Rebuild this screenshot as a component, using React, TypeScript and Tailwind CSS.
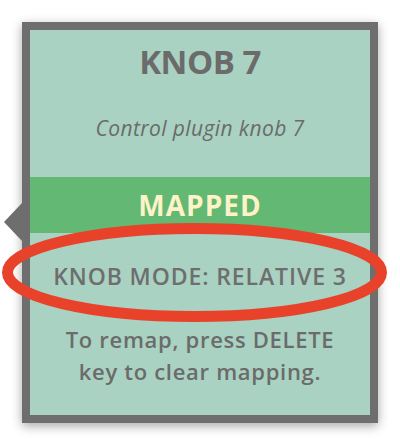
export default function App() {
  return (
    <div className="relative w-[400px] h-[446px] bg-white overflow-hidden font-['Open_Sans',sans-serif]">
      <div className="relative ml-[22px] mt-[22px] w-[356px] h-[401px] border-[8px] border-[#6e6e6e] bg-[#a9d2c2] shadow-[0_3px_10px_rgba(0,0,0,0.35)] flex flex-col">
        {/* pointer */}
        <div className="absolute -left-[26px] top-[173px] w-0 h-0 border-y-[19px] border-y-transparent border-r-[18px] border-r-[#6e6e6e]" />

        <div className="h-[147px] flex flex-col items-center text-[#6b6b6b]">
          <div className="mt-[10px] text-[33px] font-bold leading-[44px] tracking-[-0.5px]">KNOB 7</div>
          <div className="mt-[30px] text-[21px] italic leading-[28px] tracking-[0.4px]">Control plugin knob 7</div>
        </div>

        <div className="h-[56px] bg-[#63b873] flex items-center justify-center">
          <span className="text-[28px] font-bold text-[#fdf3c7] tracking-[1px]">MAPPED</span>
        </div>

        <div className="flex flex-col items-center text-[#6b6b6b]">
          <div className="mt-[28px] text-[23px] font-semibold leading-[30px] tracking-[0.9px] text-[#6e6e6e]">KNOB MODE: RELATIVE 3</div>
          <div className="mt-[32px] text-[22px] font-semibold leading-[32px] text-center tracking-[0.7px]">
            To remap, press DELETE
            <br />
            key to clear mapping.
          </div>
        </div>
      </div>

      {/* annotation */}
      <svg className="absolute left-0 top-0" width="400" height="446">
        <ellipse cx="194.5" cy="272.5" rx="187" ry="44" fill="none" stroke="#e8432a" strokeWidth="11" />
      </svg>
    </div>
  );
}
